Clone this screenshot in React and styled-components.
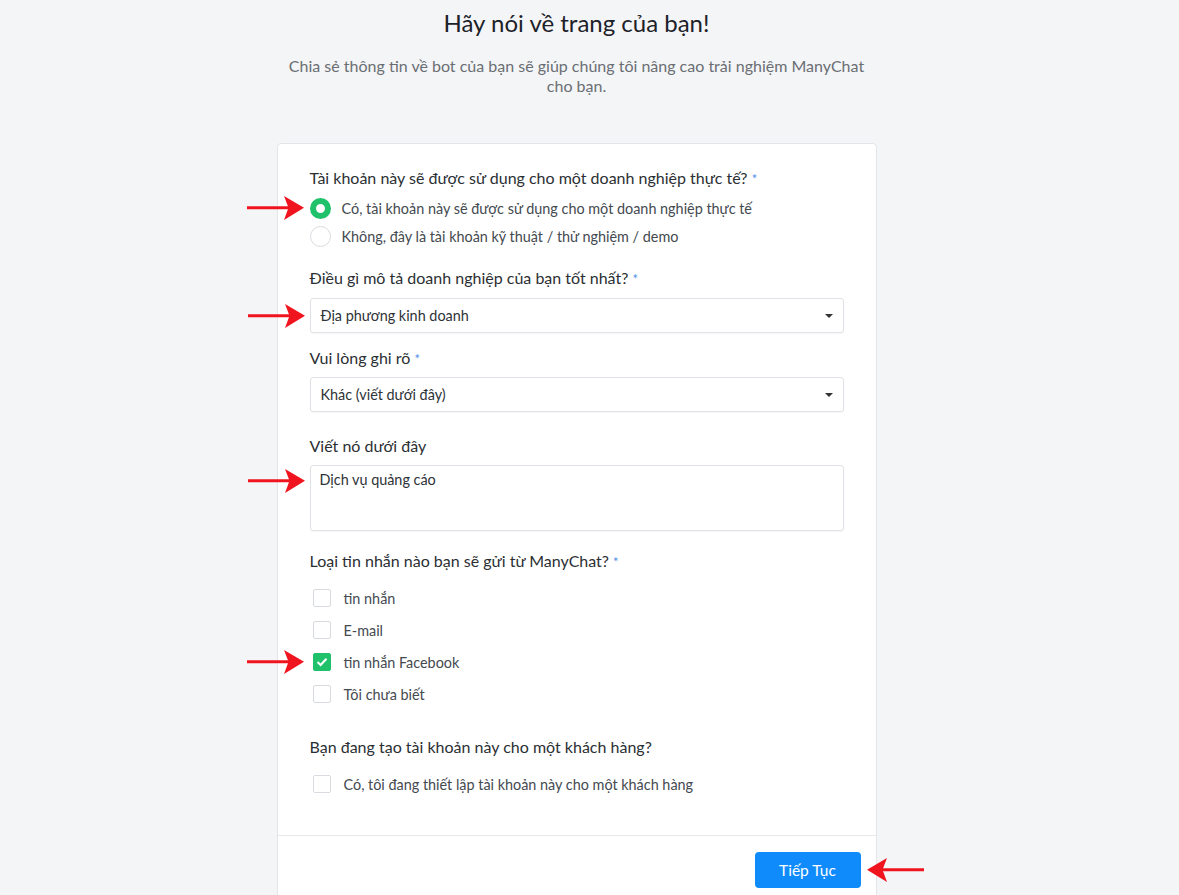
import styled, { createGlobalStyle } from "styled-components";

const GlobalStyle = createGlobalStyle`
  html, body {
    margin: 0;
    padding: 0;
    background: #f4f5f7;
    font-family: Lato, "Open Sans", Arial, sans-serif;
    color: #2e3338;
  }
  * { box-sizing: border-box; }
`;

const Page = styled.div`
  display: flex;
  flex-direction: column;
  align-items: center;
  padding: 8px 26px 0 0;
  min-height: 895px;
  overflow: hidden;
`;

const Title = styled.h1`
  margin: 0;
  font-size: 24px;
  font-weight: 400;
  line-height: 30px;
  color: #1d2129;
`;

const Subtitle = styled.p`
  margin: 18px 0 0;
  max-width: 592px;
  text-align: center;
  font-size: 16px;
  line-height: 20px;
  color: #6a6e73;
`;

const Card = styled.div`
  margin-top: 47px;
  width: 600px;
  background: #fff;
  border: 1px solid #e3e5e8;
  border-radius: 4px;
`;

const Body = styled.div`
  padding: 24px 32px 35px;
  display: flex;
  flex-direction: column;
`;

const Label = styled.div`
  font-size: 16px;
  line-height: 20px;
  color: #2b2f33;
  margin-top: ${p => p.$top || 0}px;
  margin-bottom: ${p => p.$bottom || 9}px;
`;

const Star = styled.span`
  color: #4f8fe6;
  font-size: 13px;
`;

const Option = styled.div`
  position: relative;
  display: flex;
  align-items: center;
  gap: 11px;
  height: ${p => p.$h || 28}px;
  font-size: 14.4px;
  color: #444a50;
`;

const Radio = styled.span`
  width: 21px;
  height: 21px;
  border-radius: 50%;
  flex-shrink: 0;
  background: #fff;
  border: ${p => (p.$on ? "6px solid #1fc26b" : "1px solid #d8dbdf")};
`;

const Check = styled.span`
  width: 18px;
  height: 18px;
  margin-left: 3px;
  margin-right: 2px;
  border-radius: 2px;
  flex-shrink: 0;
  display: flex;
  align-items: center;
  justify-content: center;
  background: ${p => (p.$on ? "#1fc26b" : "#fff")};
  border: 1px solid ${p => (p.$on ? "#1fc26b" : "#d8dbdf")};
`;

const Field = styled.div`
  position: relative;
  display: flex;
  align-items: ${p => (p.$area ? "flex-start" : "center")};
  justify-content: space-between;
  height: ${p => p.$h || 35}px;
  padding: ${p => (p.$area ? "5px 9px" : "0 10px")};
  border: 1px solid #dfe2e6;
  border-radius: 3px;
  box-shadow: 0 1px 2px rgba(0, 0, 0, 0.04);
  font-size: 14.4px;
  color: #2e3338;
  background: #fff;
`;

const Caret = styled.span`
  width: 0;
  height: 0;
  border-left: 4px solid transparent;
  border-right: 4px solid transparent;
  border-top: 4px solid #333;
`;

const Footer = styled.div`
  border-top: 1px solid #e6e8eb;
  display: flex;
  justify-content: flex-end;
  padding: 16px 15px 16px;
`;

const Button = styled.button`
  position: relative;
  width: 106px;
  height: 36px;
  border: none;
  border-radius: 4px;
  background: #0f8bfb;
  color: #fff;
  font-family: inherit;
  font-size: 15.5px;
`;

const ArrowMark = styled.svg`
  position: absolute;
  top: ${p => (p.$top != null ? `${p.$top}px` : "50%")};
  transform: translateY(-50%) ${p => (p.$left ? "scaleX(-1)" : "")};
  ${p => (p.$left ? "left: calc(100% + 6px);" : "left: -63px;")}
`;

function Arrow({ left, top }) {
  return (
    <ArrowMark $left={left} $top={top} width="57" height="26" viewBox="0 0 57 26">
      <path d="M0 11.3 H42 V14.3 H0 Z" fill="#f0141e" />
      <path d="M37 1 L57 12.8 L37 25 L41.5 12.8 Z" fill="#f0141e" />
    </ArrowMark>
  );
}

function Tick() {
  return (
    <svg width="12" height="10" viewBox="0 0 12 10">
      <path d="M1.5 5 L4.6 8 L10.5 1.8" stroke="#fff" strokeWidth="2" fill="none" />
    </svg>
  );
}

const messages = [
  { text: "tin nhắn", on: false },
  { text: "E-mail", on: false },
  { text: "tin nhắn Facebook", on: true },
  { text: "Tôi chưa biết", on: false },
];

export default function App() {
  return (
    <Page>
      <GlobalStyle />
      <Title>Hãy nói về trang của bạn!</Title>
      <Subtitle>
        Chia sẻ thông tin về bot của bạn sẽ giúp chúng tôi nâng cao trải nghiệm ManyChat cho bạn.
      </Subtitle>

      <Card>
        <Body>
          <Label $bottom={5}>
            Tài khoản này sẽ được sử dụng cho một doanh nghiệp thực tế? <Star>*</Star>
          </Label>
          <Option>
            <Arrow />
            <Radio $on />
            Có, tài khoản này sẽ được sử dụng cho một doanh nghiệp thực tế
          </Option>
          <Option>
            <Radio />
            Không, đây là tài khoản kỹ thuật / thử nghiệm / demo
          </Option>

          <Label $top={18} $bottom={9}>
            Điều gì mô tả doanh nghiệp của bạn tốt nhất? <Star>*</Star>
          </Label>
          <Field>
            <Arrow />
            Địa phương kinh doanh
            <Caret />
          </Field>

          <Label $top={15} $bottom={8}>
            Vui lòng ghi rõ <Star>*</Star>
          </Label>
          <Field>
            Khác (viết dưới đây)
            <Caret />
          </Field>

          <Label $top={24} $bottom={9}>Viết nó dưới đây</Label>
          <Field $area $h={66}>
            <Arrow top={15} />
            Dịch vụ quảng cáo
          </Field>

          <Label $top={20} $bottom={10}>
            Loại tin nhắn nào bạn sẽ gửi từ ManyChat? <Star>*</Star>
          </Label>
          {messages.map(m => (
            <Option key={m.text} $h={32}>
              {m.on && <Arrow />}
              <Check $on={m.on}>{m.on && <Tick />}</Check>
              {m.text}
            </Option>
          ))}

          <Label $top={27} $bottom={11}>Bạn đang tạo tài khoản này cho một khách hàng?</Label>
          <Option $h={32}>
            <Check />
            Có, tôi đang thiết lập tài khoản này cho một khách hàng
          </Option>
        </Body>
        <Footer>
          <Button>
            Tiếp Tục
            <Arrow left />
          </Button>
        </Footer>
      </Card>
    </Page>
  );
}
